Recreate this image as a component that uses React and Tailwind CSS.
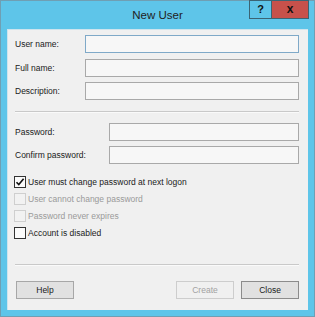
import React from "react";

const font = { fontFamily: '"Liberation Sans", Arial, sans-serif' };

function Field({ labelW, inputW, label, focused }) {
  return (
    <div className="flex items-center h-[18px]">
      <div className={`${labelW} text-[8.5px] text-[#1a1a1a]`}>{label}</div>
      <div
        className={`${inputW} h-[18px] bg-[#f7f7f7] border ${
          focused ? "border-[#7fa9c8]" : "border-[#a9a9a9]"
        }`}
      />
    </div>
  );
}

function Check({ label, checked, disabled }) {
  return (
    <div className="flex items-center h-[12px]">
      <div
        className={`w-[12px] h-[12px] border flex items-center justify-center ${
          disabled ? "border-[#cfcfcf] bg-[#f2f2f2]" : "border-[#333333] bg-[#fbfbfb]"
        }`}
      >
        {checked && (
          <svg width="10" height="10" viewBox="0 0 10 10">
            <path d="M1.5 5.2 L3.8 7.6 L8.6 1.8" fill="none" stroke="#111" strokeWidth="1.6" />
          </svg>
        )}
      </div>
      <div
        className={`ml-[2px] text-[8.5px] ${disabled ? "text-[#9a9a9a]" : "text-[#1a1a1a]"}`}
      >
        {label}
      </div>
    </div>
  );
}

export default function App() {
  return (
    <div
      style={font}
      className="w-[315px] h-[317px] bg-[#5ec5e9] border border-[#6f9fb3] flex flex-col"
    >
      <div className="relative h-[28px] flex items-center justify-center">
        <span className="text-[11.5px] text-[#222] mt-[1px]">New User</span>
        <div className="absolute right-[5px] top-[-1px] flex">
          <div className="w-[23px] h-[19px] border border-[#3b6474] bg-[#5ec5e9] flex items-center justify-center text-[11px] font-bold text-[#111]">
            ?
          </div>
          <div className="w-[37px] h-[19px] border border-l-0 border-[#3b6474] bg-[#c7514b] flex items-center justify-center text-[12px] font-bold text-[#111] pb-[2px]">
            x
          </div>
        </div>
      </div>
      <div className="ml-[6px] w-[301px] h-[281px] bg-[#f0f0f0] border-t border-l border-[#cde4ee] pl-[7px] pr-[9px] pt-[5px]">
        <Field labelW="w-[70px]" inputW="w-[215px]" label="User name:" focused />
        <div className="mt-[6px]">
          <Field labelW="w-[70px]" inputW="w-[215px]" label="Full name:" />
        </div>
        <div className="mt-[5px]">
          <Field labelW="w-[70px]" inputW="w-[215px]" label="Description:" />
        </div>
        <div className="mt-[11px] h-[2px] border-t border-[#c9c9c9] border-b border-b-[#fafafa]" />
        <div className="mt-[10px]">
          <Field labelW="w-[94px]" inputW="w-[191px]" label="Password:" />
        </div>
        <div className="mt-[5px]">
          <Field labelW="w-[94px]" inputW="w-[191px]" label="Confirm password:" />
        </div>
        <div className="mt-[12px] flex flex-col gap-[5px] -ml-[1px]">
          <Check label="User must change password at next logon" checked />
          <Check label="User cannot change password" disabled />
          <Check label="Password never expires" disabled />
          <Check label="Account is disabled" />
        </div>
        <div className="mt-[25px] h-[2px] border-t border-[#c9c9c9] border-b border-b-[#fafafa]" />
        <div className="mt-[15px] flex items-center">
          <div className="ml-[1px] w-[58px] h-[18px] bg-[#e1e1e1] border border-[#a7a7a7] flex items-center justify-center text-[8.5px] text-[#1a1a1a]">
            Help
          </div>
          <div className="ml-auto w-[58px] h-[18px] bg-[#f0f0f0] border border-[#cdcdcd] flex items-center justify-center text-[8.5px] text-[#a2a2a2]">
            Create
          </div>
          <div className="ml-[7px] w-[58px] h-[18px] bg-[#e1e1e1] border border-[#8c8c8c] flex items-center justify-center text-[8.5px] text-[#1a1a1a]">
            Close
          </div>
        </div>
      </div>
    </div>
  );
}
